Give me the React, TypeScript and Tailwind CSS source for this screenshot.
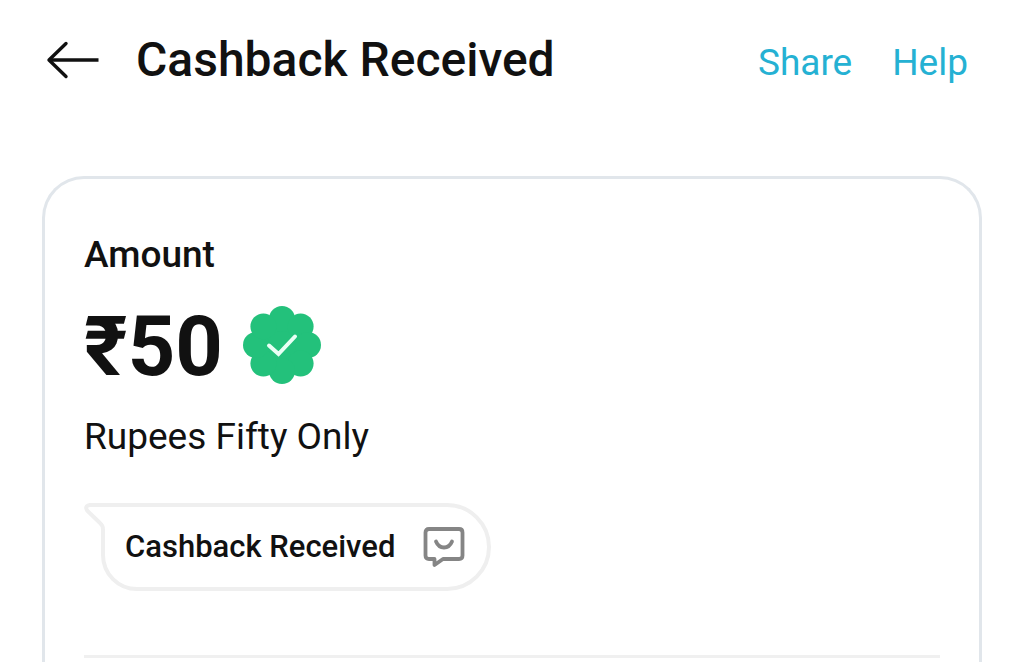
import type { ReactNode } from "react";

function BackArrow() {
  return (
    <svg width="54" height="40" viewBox="0 0 54 40" fill="none" stroke="#111111" strokeWidth="3.4" aria-hidden="true">
      <path strokeLinecap="round" strokeLinejoin="round" d="M20 3.5L3 20L20 36.5" />
      <path d="M3 20H52.5" />
    </svg>
  );
}

function VerifiedBadge() {
  return (
    <svg width="78" height="78" viewBox="0 0 78 78" role="img" aria-label="Verified">
      <g fill="#23C17B">
        <circle cx="39" cy="39" r="28" />
        <circle cx="39" cy="13" r="13" />
        <circle cx="57.6" cy="20.4" r="13" />
        <circle cx="65" cy="39" r="13" />
        <circle cx="57.6" cy="57.6" r="13" />
        <circle cx="39" cy="65" r="13" />
        <circle cx="20.4" cy="57.6" r="13" />
        <circle cx="13" cy="39" r="13" />
        <circle cx="20.4" cy="20.4" r="13" />
      </g>
      <path d="M26 39.5L35.5 48L52 30.5" fill="none" stroke="#E9FFF5" strokeWidth="4" strokeLinecap="round" />
    </svg>
  );
}

function MessageIcon() {
  return (
    <svg width="42" height="42" viewBox="0 0 42 42" fill="none" stroke="#858585" strokeWidth="3.8" strokeLinejoin="round" aria-hidden="true">
      <path d="M6 3H36Q39.5 3 39.5 6.5V29.5Q39.5 33 36 33H20L11.5 39V33H6Q2.5 33 2.5 29.5V6.5Q2.5 3 6 3Z" />
      <path strokeLinecap="round" d="M13 15.5Q15.5 21.5 21 21.5Q26.5 21.5 29 15.5" />
    </svg>
  );
}

function MessageBubble({ children }: { children: ReactNode }) {
  return (
    <div className="relative ml-[17px] flex h-22 w-fit items-center gap-7 rounded-r-[44px] rounded-bl-[36px] border-4 border-[#efefef] pl-5 pr-[22px]">
      {/* Tail, drawn over the square corner */}
      <svg className="absolute -left-[21px] -top-1" width="41" height="32" viewBox="0 0 41 32" aria-hidden="true">
        <path d="M0 0H41V4H21V32H17V0Z" fill="#ffffff" />
        <path d="M41 2H6Q0 3 3.5 8L16 20Q19 22.5 19 26.5V32" fill="#ffffff" stroke="#efefef" strokeWidth="4" />
      </svg>
      {children}
    </div>
  );
}

export default function App() {
  return (
    <div className="flex min-h-screen flex-col bg-white px-[42px] font-['Roboto',sans-serif] text-[#111111]">
      <header className="flex items-center pt-8">
        <button type="button" aria-label="Back" className="ml-1">
          <BackArrow />
        </button>
        <h1 className="ml-9 text-[48px] font-medium leading-14">Cashback Received</h1>
        <nav className="ml-auto mr-[14px] flex gap-10 pt-[6px] text-[37px] leading-12 text-[#25b1d3]">
          <a href="#share">Share</a>
          <a href="#help">Help</a>
        </nav>
      </header>

      <main className="mt-22 flex-1 rounded-t-[42px] border-3 border-b-0 border-[#e1e6eb] px-[39px]">
        <section className="pt-13">
          <h2 className="text-[37px] font-medium leading-12">Amount</h2>
          <div className="mt-4 flex items-center gap-5">
            <span className="pt-1 text-[83px] font-bold leading-24">₹50</span>
            <VerifiedBadge />
          </div>
          <p className="mt-[18px] text-[37px] leading-12">Rupees Fifty Only</p>
        </section>

        <div className="mt-[42px] border-b-3 border-[#f0f0f0] pb-16">
          <MessageBubble>
            <span className="text-[31px] font-medium leading-10">Cashback Received</span>
            <MessageIcon />
          </MessageBubble>
        </div>
      </main>
    </div>
  );
}
